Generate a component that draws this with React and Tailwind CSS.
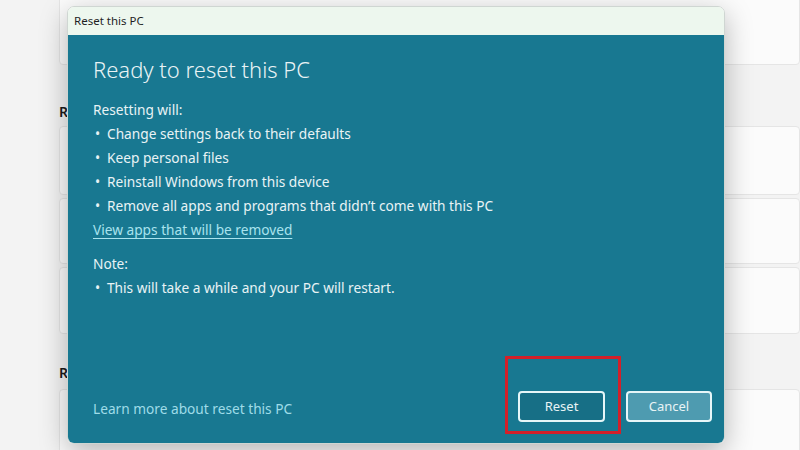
import React from "react";

function Card({ h }) {
  return (
    <div
      className="w-full rounded-[4px] border border-[#e5e5e5] bg-[#fbfbfb]"
      style={{ height: h }}
    />
  );
}

export default function App() {
  const bullets = [
    "Change settings back to their defaults",
    "Keep personal files",
    "Reinstall Windows from this device",
    "Remove all apps and programs that didn\u2019t come with this PC",
  ];
  return (
    <div
      className="relative w-[800px] h-[450px] overflow-hidden bg-[#f3f3f3]"
      style={{ fontFamily: '"Noto Sans", "Open Sans", sans-serif' }}
    >
      {/* background settings page */}
      <div className="flex flex-col pl-[59px] -mt-[6px] text-[#1b1b1b]">
        <Card h={71} />
        <div className="h-[57px] flex items-end text-[14px] font-semibold">Recovery options</div>
        <div className="mt-[4px] flex flex-col gap-[3px]">
          <Card h={69} />
          <Card h={66} />
          <Card h={67} />
        </div>
        <div className="h-[51px] flex items-end pb-[2px] text-[14px] font-semibold">Related support</div>
        <div className="mt-[4px]">
          <Card h={70} />
        </div>
      </div>

      {/* dialog */}
      <div className="absolute left-[67px] top-[6px] w-[658px] h-[438px] rounded-[7px] overflow-hidden flex flex-col shadow-[0_8px_28px_rgba(0,0,0,0.28)] border border-[#cfd6d2]">
        <div className="h-[28px] bg-[#edf7ee] flex items-center pl-[6px] text-[11.5px] text-[#1f1f1f]">
          Reset this PC
        </div>
        <div className="flex-1 bg-[#187891] flex flex-col px-[25px] pt-[19px] pb-[21px] text-[#e8f3f5]">
          <div className="text-[22px] leading-[30px] font-light">Ready to reset this PC</div>
          <div className="mt-[14px] text-[13.7px] leading-[24px]">
            <div>Resetting will:</div>
            {bullets.map((b) => (
              <div key={b} className="flex">
                <span className="w-[14px] pl-[2px]">•</span>
                <span>{b}</span>
              </div>
            ))}
            <div className="text-[#a9e3ee] underline underline-offset-[3px]">View apps that will be removed</div>
            <div className="mt-[10px]">Note:</div>
            <div className="flex">
              <span className="w-[14px] pl-[2px]">•</span>
              <span>This will take a while and your PC will restart.</span>
            </div>
          </div>
          <div className="mt-auto flex items-center justify-between">
            <div className="pt-[6px] text-[13.7px] text-[#9fdce8]">Learn more about reset this PC</div>
            <div className="flex items-center gap-[21px] mr-[-13px]">
              <div className="relative">
                <button className="w-[87px] h-[31px] rounded-[4px] border-2 border-[#e6f6f8] bg-[#176f86] text-[13px] text-[#e8f3f5]">
                  Reset
                </button>
                <div className="absolute -left-[13px] -top-[35px] w-[116px] h-[78px] border-[3px] border-[#d3202a] pointer-events-none" />
              </div>
              <button className="w-[86px] h-[31px] rounded-[4px] border-2 border-[#e6f6f8] bg-[#4e9bb0] text-[13px] text-[#e8f3f5]">
                Cancel
              </button>
            </div>
          </div>
        </div>
      </div>
    </div>
  );
}
